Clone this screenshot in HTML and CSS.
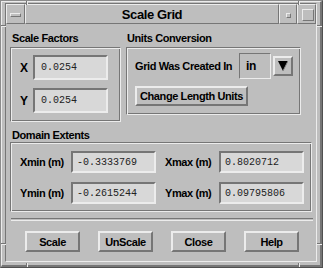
FILE: index.html
```html
<!DOCTYPE html>
<html lang="en">
<head>
  <meta charset="UTF-8">
  <title>Scale Grid</title>
  <link rel="stylesheet" href="styles.css">
</head>
<body>
  <div class="window">
    <span class="mark mark-v" style="left:25px;top:0"></span>
    <span class="mark mark-v" style="left:297px;top:0"></span>
    <span class="mark mark-v" style="left:25px;bottom:0"></span>
    <span class="mark mark-v" style="left:297px;bottom:0"></span>
    <span class="mark mark-h" style="left:0;top:24px"></span>
    <span class="mark mark-h" style="right:0;top:24px"></span>
    <span class="mark mark-h" style="left:0;top:242px"></span>
    <span class="mark mark-h" style="right:0;top:242px"></span>
    <div class="frame">
      <div class="inner">
        <div class="titlebar">
          <div class="tb-btn tb-menu"><span class="menu-bar"></span></div>
          <div class="tb-btn tb-title">Scale Grid</div>
          <div class="tb-btn tb-min"><span class="min-box"></span></div>
          <div class="tb-btn tb-max"><span class="max-box"></span></div>
        </div>

        <div class="dialog">
          <div class="top-row">
            <div class="group">
              <div class="group-title">Scale Factors</div>
              <div class="group-box scale-box">
                <div class="scale-row">
                  <span class="lbl scale-lbl">X</span>
                  <div class="field scale-field">0.0254</div>
                </div>
                <div class="scale-row">
                  <span class="lbl scale-lbl">Y</span>
                  <div class="field scale-field">0.0254</div>
                </div>
              </div>
            </div>

            <div class="group">
              <div class="group-title units-title">Units Conversion</div>
              <div class="group-box units-box">
                <div class="units-row">
                  <span class="lbl">Grid Was Created In</span>
                  <div class="option-field">in</div>
                  <div class="arrow-btn">
                    <svg width="10" height="10" viewBox="0 0 10 10">
                      <polygon points="0,0 10,0 5,10" fill="#000"/>
                      <polyline points="10,0 5,10" stroke="#8a8a8a" stroke-width="1" fill="none"/>
                    </svg>
                  </div>
                </div>
                <button class="btn change-btn">Change Length Units</button>
              </div>
            </div>
          </div>

          <div class="group">
            <div class="group-title domain-title">Domain Extents</div>
            <div class="group-box domain-box">
              <span class="lbl">Xmin (m)</span>
              <div class="field domain-field">-0.3333769</div>
              <span class="lbl max-lbl">Xmax (m)</span>
              <div class="field domain-field">0.8020712</div>
              <span class="lbl">Ymin (m)</span>
              <div class="field domain-field">-0.2615244</div>
              <span class="lbl max-lbl">Ymax (m)</span>
              <div class="field domain-field">0.09795806</div>
            </div>
          </div>

          <div class="separator"></div>

          <div class="actions">
            <button class="btn action-btn">Scale</button>
            <button class="btn action-btn">UnScale</button>
            <button class="btn action-btn">Close</button>
            <button class="btn action-btn">Help</button>
          </div>
        </div>
      </div>
    </div>
  </div>
</body>
</html>
```

FILE: styles.css
```css
body {
  margin: 0;
  background: #bebebe;
  font-family: 'Liberation Sans', Arial, sans-serif;
  font-weight: bold;
  font-size: 11px;
  letter-spacing: -0.4px;
  color: #000;
}
.window {
  position: relative;
  width: 323px;
  height: 268px;
  box-sizing: border-box;
  border: 1px solid;
  border-color: #8c8c8c #505050 #505050 #8c8c8c;
  background: #bebebe;
}
.frame {
  height: 100%;
  box-sizing: border-box;
  border-top: 1px solid #ececec;
  border-left: 1px solid #ececec;
  border-right: 2px solid #767676;
  border-bottom: 2px solid #767676;
  padding: 1px 3px 3px 3px;
}
.inner {
  height: 100%;
  box-sizing: border-box;
  border: 1px solid;
  border-color: #767676 #ececec #ececec #767676;
}
.mark {
  position: absolute;
  box-sizing: border-box;
}
.mark-v {
  width: 2px;
  height: 4px;
  border-left: 1px solid #767676;
  border-right: 1px solid #ececec;
}
.mark-h {
  width: 5px;
  height: 2px;
  border-top: 1px solid #767676;
  border-bottom: 1px solid #ececec;
}

/* title bar */
.titlebar {
  display: flex;
  height: 20px;
}
.tb-btn {
  box-sizing: border-box;
  border: 1px solid;
  border-color: #ececec #767676 #767676 #ececec;
  display: flex;
  align-items: center;
  justify-content: center;
}
.tb-menu { width: 19px; }
.tb-title {
  width: 254px;
  font-size: 13px;
  line-height: 16px;
  padding-top: 1px;
}
.tb-min { width: 18px; }
.tb-max { width: 19px; }
.menu-bar, .min-box, .max-box {
  display: block;
  box-sizing: border-box;
  border: 1px solid;
  border-color: #ececec #767676 #767676 #ececec;
}
.menu-bar { width: 11px; height: 4px; margin-top: 1px; }
.min-box { width: 5px; height: 5px; margin: 2px 0 0 1px; }
.max-box { width: 12px; height: 12px; margin: 1px 0 0 3px; }

/* dialog body */
.dialog {
  padding-left: 4px;
}
.top-row {
  display: flex;
  align-items: flex-start;
  gap: 5px;
}
.group-title {
  padding: 8px 0 0 2px;
  line-height: 13px;
  margin-bottom: 2px;
}
.units-title { padding-left: 1px; }
.domain-title { padding-top: 7px; margin-bottom: 0; }
.group-box {
  box-sizing: border-box;
  border: 1px solid;
  border-color: #767676 #ececec #ececec #767676;
  box-shadow: inset 1px 1px 0 #ececec, inset -1px -1px 0 #767676;
}
.lbl {
  white-space: nowrap;
}
.field {
  box-sizing: border-box;
  background: #d8d8d8;
  border: 2px solid;
  border-color: #767676 #ececec #ececec #767676;
  font-family: 'Liberation Mono', 'DejaVu Sans Mono', monospace;
  font-weight: normal;
  font-size: 10px;
  letter-spacing: 0;
  color: #222;
  display: flex;
  align-items: center;
}

.scale-box {
  width: 111px;
  padding: 7px 12px 8px 9px;
  display: flex;
  flex-direction: column;
  gap: 8px;
}
.scale-row {
  display: flex;
  align-items: center;
}
.scale-lbl {
  width: 13px;
  font-size: 12px;
}
.scale-field {
  width: 75px;
  height: 25px;
  padding-left: 6px;
}

.units-box {
  width: 175px;
  padding: 5px 7px 8px 8px;
  display: flex;
  flex-direction: column;
  align-items: flex-start;
  gap: 7px;
}
.units-row {
  display: flex;
  align-items: center;
  width: 100%;
}
.option-field {
  box-sizing: border-box;
  width: 32px;
  height: 26px;
  margin-left: auto;
  border: 1px solid;
  border-color: #767676 #ececec #ececec #767676;
  padding-left: 6px;
  line-height: 24px;
  font-size: 12px;
}
.arrow-btn {
  box-sizing: border-box;
  width: 20px;
  height: 20px;
  margin-left: 2px;
  border: 2px solid;
  border-color: #ececec #767676 #767676 #ececec;
  display: flex;
  align-items: center;
  justify-content: center;
}
.btn {
  box-sizing: border-box;
  background: #bebebe;
  border: 2px solid;
  border-color: #ececec #767676 #767676 #ececec;
  font: inherit;
  letter-spacing: inherit;
  color: #000;
  padding: 0;
  margin: 0;
}
.change-btn {
  width: 113px;
  height: 20px;
}

.domain-box {
  width: 302px;
  padding: 8px 7px 7px 9px;
  display: grid;
  grid-template-columns: 51px 85px 63px 85px;
  grid-auto-rows: 22px;
  row-gap: 9px;
  align-items: center;
}
.max-lbl { padding-left: 9px; }
.domain-field {
  height: 22px;
  padding-left: 4px;
}

.separator {
  margin: 6px 0 0 1px;
  width: 302px;
  height: 1px;
  border-top: 1px solid #767676;
  border-bottom: 1px solid #ececec;
}
.actions {
  display: flex;
  gap: 18px;
  margin-top: 10px;
  padding-left: 15px;
}
.action-btn {
  width: 55px;
  height: 21px;
}
```
